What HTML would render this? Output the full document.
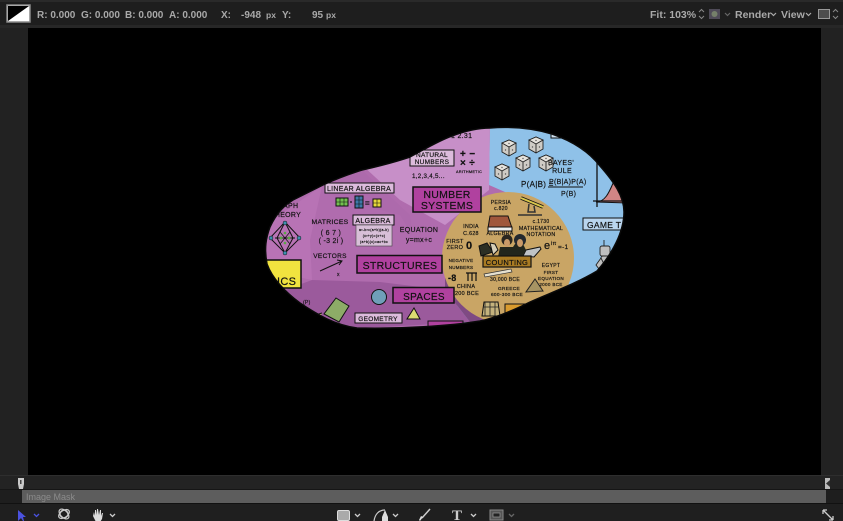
<!DOCTYPE html>
<html><head><meta charset="utf-8"><style>
html,body{margin:0;padding:0;background:#1e1e1e;width:843px;height:521px;overflow:hidden}
svg{display:block;position:absolute;left:0;top:0}
text{font-family:"Liberation Sans",sans-serif}
.b{font-weight:700}
.d{fill:#111;stroke:#111;stroke-width:.18px;font-size:6.5px;letter-spacing:.3px}
.ui{fill:#a9a9a9;font-size:10px;font-weight:700}
.soft{filter:blur(.3px)}
</style></head><body>
<svg width="843" height="521" viewBox="0 0 843 521" xmlns="http://www.w3.org/2000/svg">
<defs><clipPath id="m"><path id="blob" d="M490 128C515 126 535 129 552 134C575 142 590 153 600 166C614 182 624 196 624 212C624 232 612 254 597 271C575 284 555 291 530 302C510 312 495 318 480 321C450 326 400 329 357 328C335 325 318 315 300 303C285 292 272 278 267 264C264 248 266 238 270 227C277 212 285 205 293 200C305 194 315 189 323 185C340 177 350 174 362 170C380 166 395 162 410 157C425 149 440 140 452 136C465 131 478 128 490 128Z"/></clipPath></defs>
<rect width="843" height="521" fill="#1e1e1e"/>
<rect y="0" width="843" height="2" fill="#2a2a2a"/>
<rect y="25" width="843" height="3" fill="#272727"/>
<rect x="28" y="28" width="793" height="447" fill="#000"/>
<rect x="821" y="28" width="22" height="447" fill="#222"/>
<rect x="0" y="28" width="28" height="447" fill="#222"/>

<g class="soft">
<rect x="7" y="5" width="23" height="17" fill="#fff" stroke="#8a8a8a" stroke-width="1.500"/>
<path d="M8 21V6H29Z" fill="#000"/>
<text x="37" y="18" class="ui">R: 0.000</text>
<text x="81" y="18" class="ui">G: 0.000</text>
<text x="125" y="18" class="ui">B: 0.000</text>
<text x="169" y="18" class="ui">A: 0.000</text>
<text x="221" y="18" class="ui">X:</text>
<text x="241" y="18" class="ui">-948</text>
<text x="266" y="18" class="ui" style="font-size:8.500px">px</text>
<text x="282" y="18" class="ui">Y:</text>
<text x="312" y="18" class="ui">95</text>
<text x="326" y="18" class="ui" style="font-size:8.500px">px</text>

<text x="650" y="18" class="ui" style="font-size:10.500px">Fit: 103%</text>
<path d="M699 12l2.500-2.500 2.500 2.500M699 16l2.500 2.500 2.500-2.500" fill="none" stroke="#888" stroke-width="1"/>
<rect x="709" y="9" width="11" height="10" fill="#4f4b58"/>
<circle cx="714.500" cy="14" r="3" fill="#75806a"/>
<path d="M725 13l2.500 2.500 2.500-2.500" fill="none" stroke="#666" stroke-width="1.200"/>
<text x="735" y="18" class="ui" style="font-size:10.500px">Render</text>
<path d="M771 13l2.500 2.500 2.500-2.500" fill="none" stroke="#aaa" stroke-width="1.200"/>
<text x="781" y="18" class="ui" style="font-size:10.500px">View</text>
<path d="M806 13l2.500 2.500 2.500-2.500" fill="none" stroke="#aaa" stroke-width="1.200"/>
<rect x="818.500" y="9.500" width="11" height="9" fill="#4d4d4d" stroke="#999"/>
<path d="M833 12l2.500-2.500 2.500 2.500M833 16l2.500 2.500 2.500-2.500" fill="none" stroke="#888" stroke-width="1"/>

<g clip-path="url(#m)">
<rect x="260" y="120" width="370" height="215" fill="#8fc1e8"/>
<path d="M490 120L489 185L512 195L440 340L260 340L260 120Z" fill="#b06cae"/>
<path d="M490 120L489 190L470 205L445 225L400 200L362 165L450 125Z" fill="#c78fc8"/>
<path d="M322 186L362 170L410 215L412 235L400 215L340 200Z" fill="#ad6aac"/>
<path d="M265 225L322 186L310 240L312 280L265 270Z" fill="#b873b5"/>
<path d="M312 280L380 282L445 290L470 322L330 330L285 290Z" fill="#9b5a9c"/>
<path d="M445 290L470 322L490 322L445 270Z" fill="#7f4a83"/>
<circle cx="508" cy="258" r="66" fill="#c9a565"/>
<path d="M596 202C606 202 610 190 614 181L626 190V203Z" fill="#d18585" stroke="#111"/>
<path d="M597 160V207M593 201H625" stroke="#111" stroke-width="1.300" fill="none"/>
<rect x="583" y="218" width="50" height="12" fill="#b9d5ee" stroke="#111"/>
<text x="587" y="228" class="d" style="font-size:8.500px">GAME T</text>
<g fill="#bfbfbf" stroke="#222" stroke-width=".9">
<path d="M604 240v6"/><rect x="600" y="246" width="10" height="10" rx="2"/><rect x="601" y="256" width="12" height="8" rx="2"/><path d="M601 258l-5 7 3 4 5-5Z"/>
</g>
<rect x="551" y="128" width="30" height="10" fill="#cfe1f1" stroke="#111"/>

<g stroke="#222" stroke-width=".9">
<g id="die"><path d="M502 143l7-3 7 3v9l-7 4-7-4Z" fill="#cfccc6"/><path d="M502 143l7 4 7-4-7-3Z" fill="#e6e3dd"/><path d="M509 147v9" fill="none"/>
<circle cx="505.500" cy="150" r=".7" fill="#555" stroke="none"/><circle cx="512.500" cy="150" r=".7" fill="#555" stroke="none"/><circle cx="509" cy="143.500" r=".7" fill="#555" stroke="none"/></g>
<use href="#die" x="27" y="-3"/><use href="#die" x="14" y="15"/><use href="#die" x="37" y="15"/><use href="#die" x="-7" y="24"/>
</g>
<text x="561" y="165" class="d" text-anchor="middle" style="font-size:7px">BAYES'</text>
<text x="562" y="173" class="d" text-anchor="middle" style="font-size:7px">RULE</text>
<text x="521" y="187" class="d" style="font-size:8px">P(A|B) =</text>
<text x="549" y="184" class="d" style="font-size:7px">P(B|A)P(A)</text>
<path d="M548 187H583" stroke="#111"/>
<text x="561" y="196" class="d" style="font-size:7px">P(B)</text>

<text x="501" y="204" class="d" text-anchor="middle" style="font-size:5px">PERSIA</text>
<text x="501" y="210" class="d" text-anchor="middle" style="font-size:5px">c.820</text>
<path d="M490 216h18l4 12h-24Z" fill="#a0573c" stroke="#111"/>
<rect x="488" y="227" width="24" height="4" fill="#eee" stroke="#111"/>
<path d="M521 198l22 9" stroke="#111" stroke-width="3.500"/><path d="M521 198l22 9" stroke="#d9c64c" stroke-width="2"/>
<path d="M529 204l-1 8h7l-1-6M518 215h24" stroke="#333" stroke-width="1.500" fill="none"/>
<text x="541" y="223" class="d" text-anchor="middle" style="font-size:5px">c.1730</text>
<text x="541" y="230" class="d" text-anchor="middle" style="font-size:5.300px">MATHEMATICAL</text>
<text x="541" y="236" class="d" text-anchor="middle" style="font-size:5.300px">NOTATION</text>
<text x="471" y="228" class="d" text-anchor="middle" style="font-size:5.300px">INDIA</text>
<text x="471" y="235" class="d" text-anchor="middle" style="font-size:5.300px">C.628</text>
<text x="500" y="235" class="d" text-anchor="middle" style="font-size:5.300px">ALGEBRA</text>
<text x="455" y="243" class="d" text-anchor="middle" style="font-size:5.500px">FIRST</text>
<text x="455" y="249" class="d" text-anchor="middle" style="font-size:5.500px">ZERO</text>
<text x="466" y="249" class="d b" style="font-size:11px">0</text>
<path d="M479 246l8-3 6 9-12 4Z" fill="#2c2f24" stroke="#111"/>
<path d="M490 243l5 1 3 6-5 5Z" fill="#d7cfb8" stroke="#111"/>
<path d="M523 256l3-6 14-3 1 2-7 8Z" fill="#bfc3c6" stroke="#111"/>
<path d="M498 257l2-10h13l2-3h8l3 6-4 7Z" fill="#22261c"/>
<circle cx="507" cy="240" r="5.500" fill="#2a2620"/><circle cx="520" cy="240" r="6" fill="#23282e"/>
<ellipse cx="507" cy="243" rx="3" ry="4" fill="#c99a68"/><ellipse cx="520" cy="243" rx="3" ry="4" fill="#c99a68"/>
<rect x="483" y="256" width="48" height="11" fill="#a97b23" stroke="#111" stroke-width="1.200"/>
<text x="507" y="265" class="d" text-anchor="middle" style="font-size:7.500px">COUNTING</text>
<text x="544" y="249" class="d" style="font-size:11px">e</text>
<text x="551" y="245" class="d" style="font-size:5.500px">iπ</text>
<text x="558" y="249" class="d" style="font-size:6.500px">=-1</text>
<text x="461" y="262" class="d" text-anchor="middle" style="font-size:4.500px">NEGATIVE</text>
<text x="461" y="269" class="d" text-anchor="middle" style="font-size:4.500px">NUMBERS</text>
<text x="448" y="281" class="d b" style="font-size:9px">-8</text>
<path d="M466 273h11M468 273v8M472 273v8M476 273v8" stroke="#111" stroke-width="1.200" fill="none"/>
<path d="M484 274l27-5 1 3-27 5Z" fill="#e5e0cf" stroke="#333" stroke-width=".7"/>
<text x="490" y="281" class="d" style="font-size:5px">30,000 BCE</text>
<text x="466" y="288" class="d" text-anchor="middle" style="font-size:5.500px">CHINA</text>
<text x="467" y="295" class="d" text-anchor="middle" style="font-size:5.500px">200 BCE</text>
<text x="509" y="290" class="d" text-anchor="middle" style="font-size:4.800px">GREECE</text>
<text x="507" y="296" class="d" text-anchor="middle" style="font-size:4.800px">600-300 BCE</text>
<path d="M535 279l-9 13 17-1Z" fill="#a79463" stroke="#222"/>
<text x="551" y="267" class="d" text-anchor="middle" style="font-size:5px">EGYPT</text>
<text x="551" y="274" class="d" style="font-size:4.600px" text-anchor="middle">FIRST</text>
<text x="551" y="280" class="d" style="font-size:4.600px" text-anchor="middle">EQUATION</text>
<text x="551" y="286" class="d" style="font-size:4.600px" text-anchor="middle">2000 BCE</text>
<path d="M484 302h14l2 14h-18Z" fill="#c4b27d" stroke="#111"/>
<path d="M483 307h16M485 302v14M490 302v14M495 302v14" stroke="#222" stroke-width=".8"/>
<rect x="505" y="304" width="30" height="22" fill="#d99b2e" stroke="#111"/>

<rect x="410" y="150" width="44" height="16" fill="#dcbbdc" stroke="#111"/>
<text x="432" y="157" class="d" text-anchor="middle" style="font-size:6.500px">NATURAL</text>
<text x="432" y="164" class="d" text-anchor="middle" style="font-size:6.500px">NUMBERS</text>
<text x="412" y="178" class="d" style="font-size:6.200px">1,2,3,4,5...</text>
<text x="460" y="157" class="d b" style="font-size:10px">+ −</text>
<text x="460" y="166" class="d b" style="font-size:10px">× ÷</text>
<text x="456" y="173" class="d" style="font-size:3.800px">ARITHMETIC</text>
<text x="451" y="138" class="d" style="font-size:7px">1 2.31</text>

<rect x="413" y="187" width="68" height="25" fill="#b0419f" stroke="#111" stroke-width="1.500"/>
<text x="447" y="198" class="d" text-anchor="middle" style="font-size:10.500px">NUMBER</text>
<text x="447" y="209" class="d" text-anchor="middle" style="font-size:10.500px">SYSTEMS</text>

<rect x="325" y="183" width="69" height="10" fill="#dcbbdc" stroke="#111"/>
<text x="359" y="191" class="d" text-anchor="middle" style="font-size:7px">LINEAR ALGEBRA</text>
<rect x="336" y="198" width="12" height="8" fill="#72c04f" stroke="#111"/>
<path d="M340 198v8M344 198v8M336 202h12" stroke="#111" stroke-width=".6"/>
<rect x="355" y="196" width="8" height="12" fill="#3e79a8" stroke="#111"/>
<path d="M359 196v12M355 200h8M355 204h8" stroke="#111" stroke-width=".6"/>
<circle cx="351" cy="202" r=".9" fill="#111"/>
<text x="365" y="206" class="d b" style="font-size:8px">=</text>
<rect x="373" y="199" width="8" height="8" fill="#e8db3c" stroke="#111"/>
<path d="M377 199v8M373 203h8" stroke="#111" stroke-width=".6"/>
<rect x="353" y="215" width="41" height="10" fill="#dcbbdc" stroke="#111"/>
<text x="373" y="223" class="d" text-anchor="middle" style="font-size:7px">ALGEBRA</text>
<rect x="356" y="225" width="36" height="21" fill="#d8bfd8" stroke="#444" stroke-width=".6"/>
<text x="374" y="231" class="d" text-anchor="middle" style="font-size:3.500px">a²-b²=(a+b)(a-b)</text>
<text x="374" y="237" class="d" text-anchor="middle" style="font-size:3.500px">(x²+y)=(x+c)</text>
<text x="374" y="243" class="d" text-anchor="middle" style="font-size:3.500px">(a+b)(c)=ac+bc</text>
<text x="330" y="224" class="d" text-anchor="middle" style="font-size:6.800px">MATRICES</text>
<text x="331" y="235" class="d" text-anchor="middle" style="font-size:7px">( 6  7 )</text>
<text x="331" y="243" class="d" text-anchor="middle" style="font-size:7px">( -3 2i )</text>
<text x="330" y="258" class="d" text-anchor="middle" style="font-size:6.500px">VECTORS</text>
<path d="M320 271L342 261M337 260l5 1-3 4" stroke="#111" fill="none"/>
<text x="337" y="276" class="d" style="font-size:5px">x</text>
<text x="419" y="232" class="d" text-anchor="middle" style="font-size:7px">EQUATION</text>
<text x="419" y="242" class="d" text-anchor="middle" style="font-size:7px">y=mx+c</text>
<text x="288" y="208" class="d" style="font-size:7px" text-anchor="middle">RAPH</text>
<text x="288" y="217" class="d" style="font-size:7px" text-anchor="middle">HEORY</text>
<g stroke="#111" fill="none"><path d="M285 222L300 238L285 253L270 238Z"/><path d="M275 238h20M285 222L277 238L285 253L293 238Z"/><path d="M280 232l10 12M290 232l-10 12" stroke-width=".7"/></g>
<g fill="#3f8fb0" stroke="#111" stroke-width=".5"><circle cx="285" cy="223" r="2"/><circle cx="285" cy="253" r="2"/><circle cx="271" cy="238" r="2"/><circle cx="299" cy="238" r="2"/></g>
<circle cx="281" cy="238" r="1.500" fill="#5aa845"/><circle cx="289" cy="238" r="1.500" fill="#5aa845"/>
<circle cx="285" cy="233" r="1.300" fill="#5aa845"/><circle cx="285" cy="243" r="1.300" fill="#5aa845"/>
<rect x="260" y="260" width="41" height="28" fill="#f1e33f" stroke="#111" stroke-width="1.500"/>
<text x="277" y="285" class="d" style="font-size:11px">ICS</text>
<rect x="357" y="255.500" width="85" height="17.500" fill="#b0419f" stroke="#111" stroke-width="1.500"/>
<text x="400" y="269" class="d" text-anchor="middle" style="font-size:10.500px">STRUCTURES</text>
<rect x="393" y="287.500" width="61" height="15.500" fill="#b0419f" stroke="#111" stroke-width="1.500"/>
<text x="424" y="300" class="d" text-anchor="middle" style="font-size:10px">SPACES</text>
<circle cx="379" cy="297" r="7.500" fill="#6f9fb9" stroke="#111"/>
<path d="M336 298l13 8-10 16-15-8Z" fill="#8dac67" stroke="#111"/>
<path d="M414 307l6 11h-13Z" fill="#dcdc72" stroke="#111" transform="translate(0,1)"/>
<rect x="355" y="313" width="47" height="10" fill="#dcbbdc" stroke="#111"/>
<text x="378" y="321" class="d" text-anchor="middle" style="font-size:6.500px">GEOMETRY</text>
<path d="M322 313l-10 3 6 4" fill="#dcdc72" stroke="#111"/>
<rect x="428" y="321" width="35" height="12" fill="#b0419f" stroke="#111"/>
<text x="303" y="304" class="d" style="font-size:5px">(P)</text>
</g>
<use href="#blob" fill="none" stroke="#0a0a0a" stroke-width="1.500"/>

<rect y="475" width="843" height="15" fill="#232323"/>
<rect y="475" width="843" height="1" fill="#2e2e2e"/>
<rect x="22" y="490" width="804" height="13" fill="#5d5d5d"/>
<rect y="489" width="843" height="1" fill="#161616"/>
<rect y="503" width="843" height="1" fill="#111"/>
<rect y="504" width="843" height="17" fill="#1f1f1f"/>
<text x="26" y="500" fill="#8b8b8b" font-size="9">Image Mask</text>
<path d="M18 478h6v6l-1 5h-4l-1-5Z" fill="#c9c9c9"/><rect x="20" y="480" width="1.500" height="4" fill="#444"/>
<path d="M825 478h5v11h-5Z" fill="#bbb"/><path d="M830 480l-4 3.500 4 3.500Z" fill="#333"/>

<path d="M18 510v11l3-3 2 3h1l-1-4h3Z" fill="#4b52e0"/>
<path d="M34 514l2.500 2.500 2.500-2.500" fill="none" stroke="#4b52e0" stroke-width="1.300"/>
<g fill="none" stroke="#ccc" stroke-width="1.200"><ellipse cx="64" cy="514" rx="6" ry="3.500" transform="rotate(-35 64 514)"/><ellipse cx="64" cy="514" rx="6" ry="3.500" transform="rotate(45 64 514)"/><circle cx="64" cy="514" r="4"/></g>
<path d="M94 512l1 4v-6l1 0 1 5 0-6 1 0 1 6 1-5 1 0 0 6 1-3 1 0-1 6-2 3h-4l-3-6Z" fill="#ddd"/>
<path d="M110 514l2.500 2.500 2.500-2.500" fill="none" stroke="#ccc" stroke-width="1.300"/>
<rect x="337.500" y="510.500" width="12" height="10" rx="1.500" fill="#aaa" stroke="#ddd"/>
<path d="M355 514l2.500 2.500 2.500-2.500M393 514l2.500 2.500 2.500-2.500M471 514l2.500 2.500 2.500-2.500" fill="none" stroke="#ccc" stroke-width="1.300"/>
<path d="M374 521c1-7 5-11 11-11" fill="none" stroke="#ccc" stroke-width="1.200"/><path d="M385 510l-3 7v4h6v-4Z" fill="#ddd"/>
<path d="M430 509l-8 9" stroke="#ccc" stroke-width="1.500"/><path d="M420 521l3-4-2-1-2 4Z" fill="#ddd"/>
<text x="452" y="520" fill="#ccc" style="font-family:'Liberation Serif',serif;font-weight:700;font-size:15px">T</text>
<rect x="490" y="510" width="13" height="10" fill="#555" stroke="#888"/><rect x="493" y="513" width="7" height="4" fill="#222" stroke="#999" stroke-width=".7"/>
<path d="M509 514l2.500 2.500 2.500-2.500" fill="none" stroke="#666" stroke-width="1.300"/>
<path d="M823 510l10 10M823 510h4M823 510v4M833 520h-4M833 520v-4" stroke="#ccc" stroke-width="1.300" fill="none"/>
</g>
</svg>
</body></html>
